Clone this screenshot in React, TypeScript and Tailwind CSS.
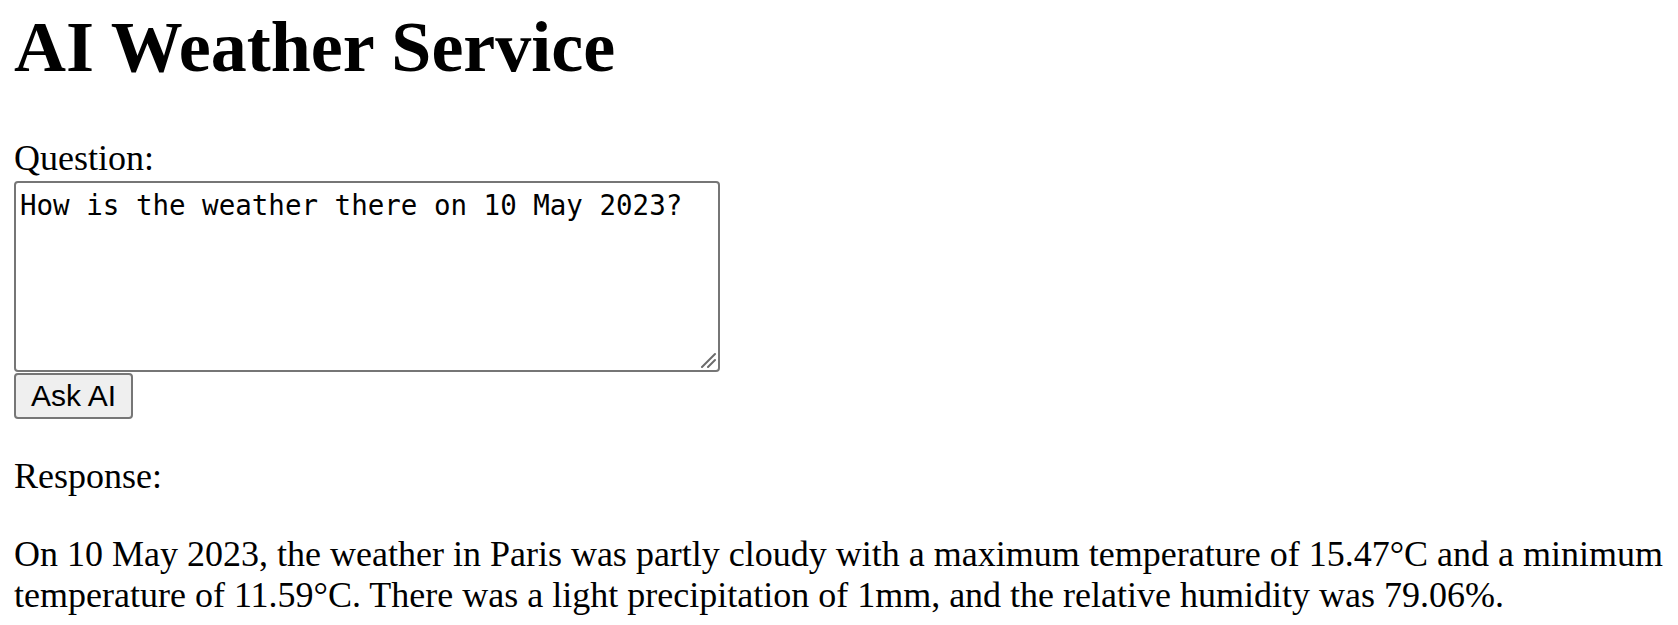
import React, { useState } from 'react';

const serif = "font-['Liberation_Serif','Times_New_Roman',serif]";

function ResizeGrip() {
  return (
    <svg
      className="pointer-events-none absolute right-[4px] bottom-[4px]"
      width="16"
      height="16"
      viewBox="0 0 16 16"
    >
      <path d="M2 15 L15 2" stroke="#6b6b6b" strokeWidth="2" strokeLinecap="round" />
      <path d="M8 15 L15 8" stroke="#6b6b6b" strokeWidth="2" strokeLinecap="round" />
    </svg>
  );
}

function App() {
  const [question, setQuestion] = useState('How is the weather there on 10 May 2023?');

  return (
    <div className={`min-h-screen bg-white pl-[14px] pr-[4px] text-black ${serif}`}>
      <h1 className="pt-[6px] text-[72px] leading-[83px] font-bold">AI Weather Service</h1>

      <div className="mt-[49px] flex flex-col items-start">
        <label htmlFor="question" className="text-[36px] leading-[41px]">
          Question:
        </label>
        <div className="relative mt-[2px]">
          <textarea
            id="question"
            value={question}
            onChange={(e) => setQuestion(e.target.value)}
            className="block h-[191px] w-[706px] resize-none rounded-[4px] border-2 border-[#767676] bg-white px-[4px] pt-[6px] font-['DejaVu_Sans_Mono','Liberation_Mono',monospace] text-[27.5px] leading-[32px] text-black outline-none"
          />
          <ResizeGrip />
        </div>
        <button className="mt-[1px] h-[46px] w-[119px] rounded-[4px] border-2 border-[#767676] bg-[#efefef] font-['Liberation_Sans',Arial,sans-serif] text-[30px] leading-[34px] text-black">
          Ask AI
        </button>
      </div>

      <p className="mt-[37px] text-[36px] leading-[41px]">Response:</p>
      <p className="mt-[37px] text-[36px] leading-[41px]">
        On 10 May 2023, the weather in Paris was partly cloudy with a maximum temperature of 15.47°C and a minimum
        temperature of 11.59°C. There was a light precipitation of 1mm, and the relative humidity was 79.06%.
      </p>
    </div>
  );
}

export default App;
